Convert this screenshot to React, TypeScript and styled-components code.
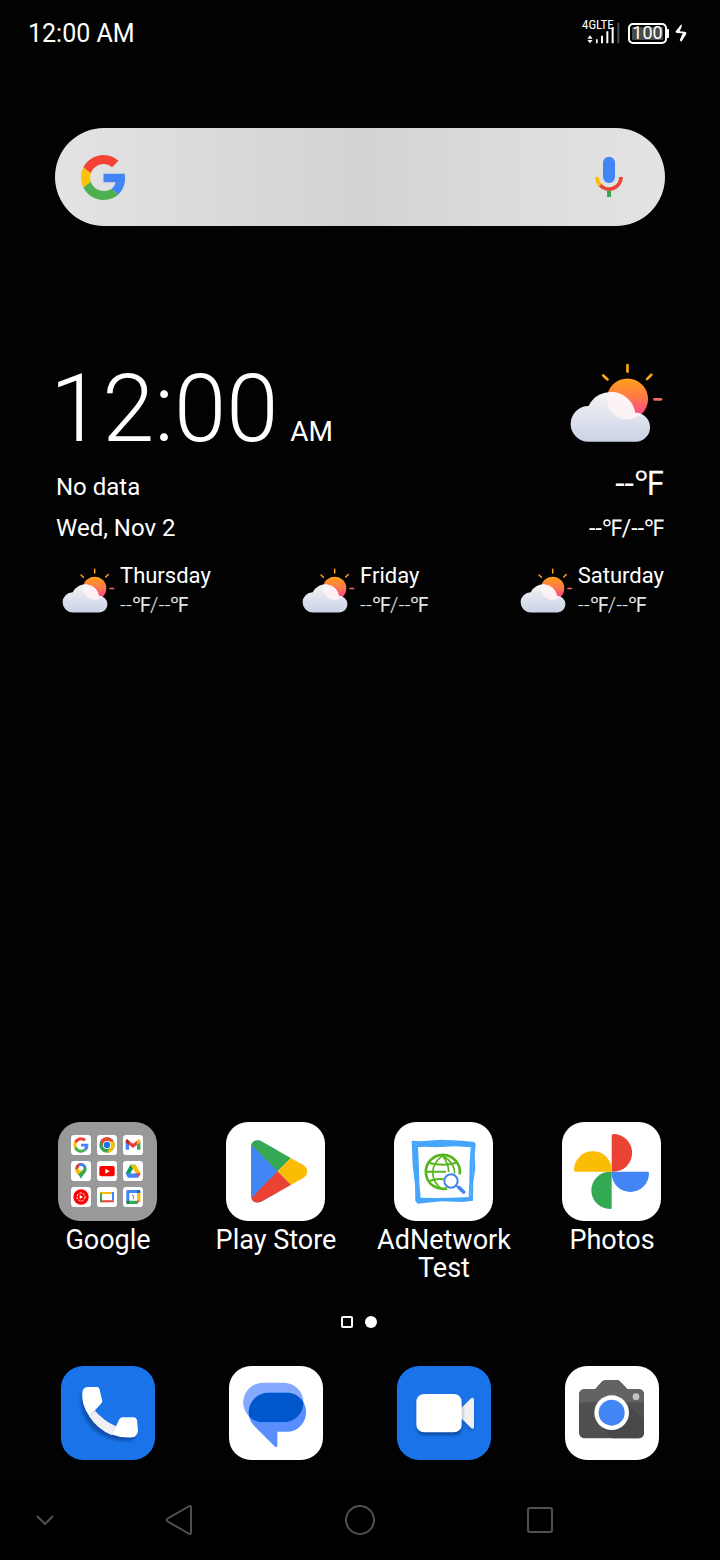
import React from 'react';
import styled, { createGlobalStyle } from 'styled-components';

const GlobalStyle = createGlobalStyle`
  *, *::before, *::after { box-sizing: border-box; }
  html, body { margin: 0; padding: 0; background: #020202; }
  button, input { font: inherit; color: inherit; border: 0; padding: 0; margin: 0; background: none; }
  button { cursor: pointer; }
  svg { display: block; flex: none; }
`;

const Screen = styled.div`
  display: flex;
  flex-direction: column;
  min-height: 100vh;
  background: #020202;
  color: #fff;
  font-family: Roboto, 'Liberation Sans', sans-serif;
  font-weight: 400;
`;

const StatusBar = styled.header`
  display: flex;
  align-items: center;
  justify-content: space-between;
  height: 68px;
  padding: 0 33px 0 28px;
  font-size: 25px;
  line-height: 30px;
`;

const StatusIcons = styled.div`
  display: flex;
  align-items: center;
  padding-bottom: 2px;
`;

const Network = styled.div`
  position: relative;
  margin: 0 8px 4px 0;
`;

const NetworkLabel = styled.span`
  position: absolute;
  top: 0;
  left: 0;
  font-family: 'Roboto Condensed', 'Liberation Sans Narrow', Roboto, sans-serif;
  font-size: 13px;
  line-height: 13px;
`;

const BatteryBody = styled.div`
  display: flex;
  align-items: center;
  justify-content: center;
  width: 39px;
  height: 21px;
  border: 2px solid #fff;
  border-radius: 5px;
  background: #4a4a4a;
  box-shadow: inset 0 0 0 2px #020202;
  font-size: 18px;
  line-height: 18px;
`;

const BatteryTip = styled.div`
  width: 2px;
  height: 9px;
  margin-right: 5px;
  border-radius: 0 1px 1px 0;
  background: #fff;
`;

const SearchForm = styled.form`
  display: flex;
  align-items: center;
  height: 98px;
  margin: 60px 55px 0;
  padding: 0 40px 0 26px;
  border-radius: 49px;
  background: linear-gradient(90deg, #e3e3e3 0%, #dddddd 18%, #d3d3d3 50%, #dcdcdc 75%, #e3e3e3 100%);
`;

const SearchInput = styled.input`
  flex: 1;
  min-width: 0;
  height: 60px;
  margin: 0 16px;
  color: #222;
  font-size: 27px;
  outline: none;
`;

const Weather = styled.section`
  margin: 137px 56px 0;
`;

const Columns = styled.div`
  display: flex;
  justify-content: space-between;
`;

const Side = styled.div<{ $end?: boolean }>`
  display: flex;
  flex-direction: column;
  align-items: ${(p) => (p.$end ? 'flex-end' : 'flex-start')};
`;

const Clock = styled.div`
  display: flex;
  align-items: baseline;
  height: 104px;
  margin-left: -6px;
  font-size: 94px;
  font-weight: 300;
  line-height: 92px;
`;

const Meridiem = styled.span`
  margin-left: 12px;
  font-size: 28px;
  font-weight: 400;
`;

const ArtBox = styled.div`
  height: 100px;
  padding-right: 1px;
`;

const Line = styled.div`
  font-size: 24px;
  line-height: 41px;
`;

const CurrentTemp = styled(Line)`
  margin-bottom: 4px;
  font-size: 34px;
`;

const TempRange = styled(Line)`
  font-size: 23px;
`;

const Forecast = styled.ul`
  display: flex;
  justify-content: space-between;
  margin: 12px 0 0;
  padding: 0 0 0 6px;
  list-style: none;
`;

const Day = styled.li`
  display: flex;
  align-items: center;
  gap: 5px;
  font-size: 22px;
  line-height: 30px;
`;

const DayTemp = styled.div`
  font-size: 21px;
  font-weight: 300;
  line-height: 28px;
  color: #e4e4e4;
`;

const Spacer = styled.div`
  flex: 1;
`;

const AppGrid = styled.nav`
  display: grid;
  grid-template-columns: repeat(4, 1fr);
  padding: 0 24px;
`;

const AppButton = styled.button`
  display: flex;
  flex-direction: column;
  align-items: center;
  gap: 5px;
`;

const Tile = styled.span<{ $size: number; $bg: string }>`
  display: block;
  width: ${(p) => p.$size}px;
  height: ${(p) => p.$size}px;
  margin-right: 1px;
  border-radius: 22px;
  overflow: hidden;
  background: ${(p) => p.$bg};
`;

const Folder = styled.span`
  display: grid;
  grid-template-columns: repeat(3, 20px);
  gap: 6px;
  padding: 13px;
`;

const AppLabel = styled.span`
  max-width: 150px;
  font-size: 27px;
  line-height: 28px;
  text-align: center;
`;

const Pager = styled.div`
  display: flex;
  justify-content: center;
  align-items: center;
  gap: 12px;
  margin: 34px 2px 38px 0;
`;

const PageMark = styled.button<{ $active?: boolean }>`
  width: 12px;
  height: 12px;
  border: ${(p) => (p.$active ? '0' : '2px solid #fff')};
  border-radius: ${(p) => (p.$active ? '50%' : '2px')};
  background: ${(p) => (p.$active ? '#fff' : 'transparent')};
`;

const NavBar = styled.footer`
  display: grid;
  grid-template-columns: 1fr 2fr 2fr 2fr 1fr;
  align-items: center;
  height: 80px;
  margin-top: 20px;
  background: #000;
`;

const NavButton = styled.button`
  display: flex;
  align-items: center;
  justify-content: center;
  height: 80px;
`;

const GPaths = () => (
  <>
    <path fill="#f44336" d="M24 9.5c3.54 0 6.71 1.22 9.21 3.6l6.85-6.85C35.9 2.38 30.47 0 24 0 14.62 0 6.51 5.38 2.56 13.22l7.98 6.19C12.43 13.72 17.74 9.5 24 9.5z" />
    <path fill="#4285f4" d="M46.98 24.55c0-1.57-.15-3.09-.38-4.55H24v9.02h12.94c-.58 2.96-2.26 5.48-4.78 7.18l7.73 6c4.51-4.18 7.09-10.36 7.09-17.65z" />
    <path fill="#ffc107" d="M10.53 28.59c-.48-1.45-.76-2.99-.76-4.59s.27-3.14.76-4.59l-7.98-6.19C.92 16.46 0 20.12 0 24c0 3.88.92 7.54 2.56 10.78l7.97-6.19z" />
    <path fill="#4caf50" d="M24 48c6.48 0 11.93-2.13 15.89-5.81l-7.73-6c-2.15 1.45-4.92 2.3-8.16 2.3-6.26 0-11.57-4.22-13.47-9.91l-7.98 6.19C6.51 42.62 14.62 48 24 48z" />
  </>
);

const MicIcon = () => (
  <svg width="32" height="42" viewBox="593 156 32 42" aria-hidden="true">
    <rect x="603" y="156.7" width="12" height="26.3" rx="6" fill="#4285f4" />
    <path d="M597 177a12 12 0 0 0 3.4 8.4" fill="none" stroke="#fbbc05" strokeWidth="3.8" />
    <path d="M600.2 185.2A12 12 0 0 0 621 177" fill="none" stroke="#ea4335" strokeWidth="3.8" />
    <path d="M607 191h4v6h-4z" fill="#34a853" />
  </svg>
);

const SignalIcon = () => (
  <svg width="38" height="26" viewBox="66 54 114 78" aria-hidden="true">
    <path fill="#fff" d="M82 116l8-10 8 10zM82 120l8 10 8-10zM108 118h5v12h-5zM123 107h6v23h-6zM139 94h6v36h-6zM155 81h6v49h-6z" />
    <path fill="#4c4c4c" d="M172 68h6v62h-6z" />
  </svg>
);

const BoltIcon = () => (
  <svg width="13" height="20" viewBox="340 70 39 60" aria-hidden="true">
    <path d="M362 74L345 95Q344 100 349 100L366 101L357 122L362 126L377 103Q378 96 372 96L357 95L364 79Z" fill="#fff" />
  </svg>
);

const CloudSun = ({ width, height, id }: { width: number; height: number; id: string }) => (
  <svg width={width} height={height} viewBox="60 40 280 240" aria-hidden="true">
    <defs>
      <linearGradient id={`${id}-sun`} x1="0" y1="0" x2="0" y2="1">
        <stop offset="0" stopColor="#ff9f1a" />
        <stop offset="0.45" stopColor="#ff7a45" />
        <stop offset="0.85" stopColor="#ff4b86" />
        <stop offset="1" stopColor="#ff4b90" />
      </linearGradient>
      <linearGradient id={`${id}-cloud`} x1="0" y1="0" x2="0" y2="1">
        <stop offset="0" stopColor="#f4f4f4" />
        <stop offset="1" stopColor="#cbd2e6" />
      </linearGradient>
      <clipPath id={`${id}-clip`}>
        <path d="M116 277A54 54 0 0 1 116 169A74 74 0 0 1 256 189A44 44 0 0 1 258 277Z" />
      </clipPath>
    </defs>
    <g stroke="#ffa416" strokeWidth="8" strokeLinecap="round">
      <path d="M233 46v20M160 77l13 12M305 75l-13 13" />
      <path stroke="#f0695a" d="M314 149h20" />
    </g>
    <circle cx="233" cy="148" r="62" fill={`url(#${id}-sun)`} />
    <path d="M116 277A54 54 0 0 1 116 169A74 74 0 0 1 256 189A44 44 0 0 1 258 277Z" fill={`url(#${id}-cloud)`} />
    <circle cx="233" cy="148" r="62" fill="#fff3f4" fillOpacity="0.85" clipPath={`url(#${id}-clip)`} />
  </svg>
);

const MiniTile = ({ children }: { children: React.ReactNode }) => (
  <svg width="20" height="20" viewBox="0 0 60 60" aria-hidden="true">
    <rect width="60" height="60" rx="10" fill="#fff" />
    {children}
  </svg>
);

const GoogleFolder = () => (
  <Folder>
    <MiniTile>
      <g transform="translate(7 7) scale(.96)">
        <GPaths />
      </g>
    </MiniTile>
    <MiniTile>
      <circle cx="30" cy="30" r="23" fill="#34a853" />
      <path d="M30 18.500H49.900A23 23 0 0 1 30 53L40 36Z" fill="#fbbc05" />
      <path d="M10.100 18.500L20 36L30 30V18.500H49.900A23 23 0 0 0 10.100 18.500Z" fill="#ea4335" />
      <circle cx="30" cy="30" r="12" fill="#fff" />
      <circle cx="30" cy="30" r="9.500" fill="#1a73e8" />
    </MiniTile>
    <MiniTile>
      <path d="M8 18v26h10V25z" fill="#4285f4" />
      <path d="M52 18v26H42V25z" fill="#34a853" />
      <path d="M18 17l12 9 12-9v13L30 39 18 30z" fill="#ea4335" />
      <path d="M8 18q0-6 6-5l4 4v13L8 22z" fill="#c5221f" />
      <path d="M52 18q0-6-6-5l-4 4v13l10-8z" fill="#fbbc05" />
    </MiniTile>
    <MiniTile>
      <path d="M30 54C27 42 13 36 13 23A17 17 0 0 1 47 23C47 36 33 42 30 54Z" fill="#34a853" />
      <path d="M17 12A17 17 0 0 1 36 7L20 28L13 23Q13 16 17 12Z" fill="#ea4335" />
      <path d="M14 28L30 15L38 26L20 41Q15 35 14 28Z" fill="#fbbc05" />
      <path d="M25 8A17 17 0 0 1 45 16L35 27L22 18Z" fill="#4285f4" />
      <circle cx="30" cy="22" r="7" fill="#fff" />
    </MiniTile>
    <MiniTile>
      <rect x="7" y="15" width="46" height="31" rx="6" fill="#f00" />
      <path d="M25 23v15l13-7.500z" fill="#fff" />
    </MiniTile>
    <MiniTile>
      <path d="M22 11h16L18 47 8 37z" fill="#0f9d58" />
      <path d="M22 11h16l15 26H38z" fill="#fbbc04" />
      <path d="M16 37h37l-8 13H15L8 38z" fill="#4285f4" />
      <path d="M40 37h13l-7 12z" fill="#ea4335" />
      <path d="M30 24l8 13H22z" fill="#fff" />
    </MiniTile>
    <MiniTile>
      <circle cx="30" cy="30" r="23" fill="#f00" />
      <circle cx="30" cy="30" r="12" fill="none" stroke="#fff" strokeWidth="3" strokeDasharray="7 3" />
      <path d="M26 24v12l10-6z" fill="#fff" />
    </MiniTile>
    <MiniTile>
      <path d="M9 15h36v6H9z" fill="#fbbc04" />
      <path d="M9 19h6v27H9z" fill="#34a853" />
      <path d="M45 15h6v25h-6z" fill="#4285f4" />
      <path d="M13 40h38v6H13z" fill="#ea4335" />
    </MiniTile>
    <MiniTile>
      <path d="M10 13q0-4 4-4h30v9H19v24h-9z" fill="#4285f4" />
      <path d="M42 9h7q3 0 3 3v7H42z" fill="#1967d2" />
      <path d="M42 18h10v24H42z" fill="#fbbc04" />
      <path d="M18 41h24v10H18z" fill="#34a853" />
      <path d="M10 41h9v10h-5q-4 0-4-4z" fill="#188038" />
      <path d="M42 41h10L42 51z" fill="#ea4335" />
      <path d="M27 25h4v11" fill="none" stroke="#4285f4" strokeWidth="3" />
    </MiniTile>
  </Folder>
);

const PlayArt = () => (
  <svg width="99" height="99" viewBox="33 21 297 297" aria-hidden="true">
    <defs>
      <clipPath id="play-shape">
        <path d="M108 97Q109 76 127 76Q134 76 141 80L266 151Q277 159 277 169Q277 180 266 188L141 259Q134 263 127 263Q109 262 108 242Z" />
      </clipPath>
    </defs>
    <g clipPath="url(#play-shape)">
      <path d="M100 60H188V280H100Z" fill="#4285f4" />
      <path d="M90 70L188 169L300 57V40H90Z" fill="#34a853" />
      <path d="M90 268L188 169L300 281V300H90Z" fill="#ea4335" />
      <path d="M188 169L290 67V271Z" fill="#fbbc04" />
    </g>
  </svg>
);

const AdNetworkArt = () => (
  <svg width="99" height="99" viewBox="57 21 297 297" aria-hidden="true">
    <path fillRule="evenodd" fill="#45a6fb" d="M110 77L134 79L200 74L263 77L297 81L302 86L299 120L301 160L295 200L294 257L262 261L200 259L155 263L128 266L121 258L120 210L113 150ZM129 97L132 160L133 204L137 248L180 249L230 248L281 246L283 200L284 140L287 97L240 94L180 97L150 95Z" />
    <path d="M112 84L130 90M117 140L129 150M290 95L293 180M287 245L289 205" stroke="#5ab3fd" strokeWidth="3" fill="none" />
    <g fill="none" stroke="#55b51b">
      <path d="M216 220A51 51 0 1 1 254 178" strokeWidth="8" />
      <path d="M203 122C164 150 164 195 200 222M203 122C235 140 240 158 239 176M203 122C217 140 221 155 221 171" strokeWidth="5" />
      <path d="M163 144Q203 154 243 144M153 170H213M163 198Q185 190 206 193" strokeWidth="6" />
    </g>
    <circle cx="228" cy="198" r="20" fill="#fff" stroke="#3f86f3" strokeWidth="6" />
    <path d="M244 212L252 219" stroke="#3f86f3" strokeWidth="5" />
    <path d="M252 218L266 231" stroke="#3f86f3" strokeWidth="11" strokeLinecap="round" />
  </svg>
);

const PhotosArt = () => (
  <svg width="99" height="99" viewBox="36 21 297 297" aria-hidden="true">
    <path fill="#ea4335" d="M185 170V62Q185 57 190 57A56 56 0 0 1 190 170Z" />
    <path fill="#4285f4" d="M185 170H293Q298 170 297 175A56 56 0 0 1 185 175Z" />
    <path fill="#34a853" d="M185 170V278Q185 283 180 282A56 56 0 0 1 180 170Z" />
    <path fill="#fbbc04" d="M185 170H77Q72 170 72 165A56 56 0 0 1 185 165Z" />
  </svg>
);

const PhoneArt = () => (
  <svg width="94" height="94" viewBox="62 196 282 282" aria-hidden="true">
    <defs>
      <filter id="phone-shadow" x="-20%" y="-20%" width="140%" height="140%">
        <feGaussianBlur stdDeviation="4" />
      </filter>
    </defs>
    <path d="M124 278Q113 335 158 386Q205 426 275 420L292 400L200 395Z" fill="#10459a" opacity="0.75" filter="url(#phone-shadow)" />
    <path d="M146 346L164 330Q190 360 227 377L214 403Q170 385 146 346Z" fill="#eef0f2" />
    <path d="M126 275Q128 260 142 259L171 259Q177 260 178 267L186 302Q185 306 182 309L164 329L147 347Q122 312 126 275Z" fill="#fff" />
    <path d="M227 377L237 356Q240 350 247 350H280Q288 351 290 358L293 390Q291 408 276 410Q243 413 212 401Z" fill="#fff" />
    <path d="M147 347L165 330M212 401L226 377" stroke="#d5d8dd" strokeWidth="3" />
  </svg>
);

const MessagesArt = () => (
  <svg width="94" height="94" viewBox="566 196 282 282" aria-hidden="true">
    <defs>
      <clipPath id="message-bubble">
        <path d="M668 246H730A59 59 0 0 1 730 365H668A59 59 0 0 1 668 246Z" />
      </clipPath>
    </defs>
    <path d="M668 246H730A59 59 0 0 1 730 365H668A59 59 0 0 1 668 246Z" fill="#84a9ff" />
    <path d="M684 276H746A59 59 0 0 1 746 393H711V435Q710 441 704 438L640 374Q625 358 625 335A59 59 0 0 1 684 276Z" fill="#5a8eff" />
    <path d="M684 276H746A59 59 0 0 1 746 393H711V435L640 374Q625 358 625 335A59 59 0 0 1 684 276Z" fill="#0057cc" clipPath="url(#message-bubble)" />
  </svg>
);

const VideoArt = () => (
  <svg width="94" height="94" viewBox="50 196 282 282" aria-hidden="true">
    <defs>
      <filter id="video-shadow" x="-20%" y="-20%" width="140%" height="150%">
        <feGaussianBlur stdDeviation="5" />
      </filter>
    </defs>
    <rect x="110" y="290" width="134" height="114" rx="22" fill="#0b3f94" opacity="0.8" filter="url(#video-shadow)" />
    <path d="M244 333L270 302L281 306V388L270 388L244 360Z" fill="#0b3f94" opacity="0.5" filter="url(#video-shadow)" />
    <path d="M243 322L272 293Q280 288 281 297V379Q280 388 272 382L243 353Z" fill="#eef0f2" />
    <path d="M243 322L252 314V361L243 353Z" fill="#cfd6df" />
    <rect x="108" y="280" width="136" height="115" rx="23" fill="#fff" />
  </svg>
);

const CameraArt = () => (
  <svg width="94" height="94" viewBox="554 196 282 282" aria-hidden="true">
    <path d="M596 282Q597 266 614 265H645L664 244Q668 239 675 239H710Q716 239 720 243L741 265H774Q791 266 791 282V396Q790 412 774 413H614Q597 412 596 396Z" fill="#505050" />
    <path d="M596 305V282Q597 266 614 265H645L664 244Q668 239 675 239H710Q716 239 720 243L741 265H774Q791 266 791 282V305Z" fill="#636363" />
    <path d="M735 305L791 357V396Q790 412 774 413H696L660 376Z" fill="#484848" />
    <circle cx="694" cy="336" r="52" fill="#fff" />
    <circle cx="694" cy="336" r="39" fill="#4285f4" />
    <circle cx="767" cy="288" r="10" fill="#c2c2c2" />
  </svg>
);

const apps = [
  { label: 'Google', bg: '#999999', art: <GoogleFolder /> },
  { label: 'Play Store', bg: '#ffffff', art: <PlayArt /> },
  { label: 'AdNetwork Test', bg: '#ffffff', art: <AdNetworkArt /> },
  { label: 'Photos', bg: '#ffffff', art: <PhotosArt /> },
];

const dock = [
  { label: 'Phone', bg: '#1a73e8', art: <PhoneArt /> },
  { label: 'Messages', bg: '#ffffff', art: <MessagesArt /> },
  { label: 'Video calls', bg: '#1a73e8', art: <VideoArt /> },
  { label: 'Camera', bg: '#ffffff', art: <CameraArt /> },
];

const days = ['Thursday', 'Friday', 'Saturday'];

const navStroke = { fill: 'none', stroke: '#505050', strokeWidth: 2, strokeLinejoin: 'round' as const };

export default function App() {
  return (
    <Screen>
      <GlobalStyle />
      <StatusBar>
        <span>12:00 AM</span>
        <StatusIcons>
          <Network>
            <SignalIcon />
            <NetworkLabel>4GLTE</NetworkLabel>
          </Network>
          <BatteryBody>100</BatteryBody>
          <BatteryTip />
          <BoltIcon />
        </StatusIcons>
      </StatusBar>

      <SearchForm role="search" onSubmit={(e) => e.preventDefault()}>
        <svg width="45" height="45" viewBox="0 0 48 48" aria-hidden="true">
          <GPaths />
        </svg>
        <SearchInput type="text" aria-label="Search" />
        <button type="button" aria-label="Voice search">
          <MicIcon />
        </button>
      </SearchForm>

      <Weather>
        <Columns>
          <Side>
            <Clock>
              12:00<Meridiem>AM</Meridiem>
            </Clock>
            <Line>No data</Line>
            <Line>Wed, Nov 2</Line>
          </Side>
          <Side $end>
            <ArtBox>
              <CloudSun width={93} height={80} id="today" />
            </ArtBox>
            <CurrentTemp>--℉</CurrentTemp>
            <TempRange>--℉/--℉</TempRange>
          </Side>
        </Columns>
        <Forecast>
          {days.map((day) => (
            <Day key={day}>
              <CloudSun width={53} height={45} id={day} />
              <div>
                {day}
                <DayTemp>--℉/--℉</DayTemp>
              </div>
            </Day>
          ))}
        </Forecast>
      </Weather>

      <Spacer />

      <AppGrid aria-label="Apps">
        {apps.map((app) => (
          <AppButton key={app.label} type="button">
            <Tile $size={99} $bg={app.bg}>{app.art}</Tile>
            <AppLabel>{app.label}</AppLabel>
          </AppButton>
        ))}
      </AppGrid>

      <Pager>
        <PageMark type="button" aria-label="Page 1" />
        <PageMark type="button" aria-label="Page 2" $active />
      </Pager>

      <AppGrid aria-label="Dock">
        {dock.map((app) => (
          <AppButton key={app.label} type="button" aria-label={app.label}>
            <Tile $size={94} $bg={app.bg}>{app.art}</Tile>
          </AppButton>
        ))}
      </AppGrid>

      <NavBar>
        <NavButton type="button" aria-label="Hide">
          <svg width="20" height="12" viewBox="0 0 20 12"><path d="M2 2l8 8 8-8" {...navStroke} /></svg>
        </NavButton>
        <NavButton type="button" aria-label="Back">
          <svg width="28" height="32" viewBox="0 0 28 32"><path d="M22.500 2.500L1.500 14.700Q0 16 1.500 17.300L22.500 29.500Q25 31 25 28.500V3.500Q25 1 22.500 2.500Z" {...navStroke} /></svg>
        </NavButton>
        <NavButton type="button" aria-label="Home">
          <svg width="32" height="32" viewBox="0 0 32 32"><circle cx="16" cy="16" r="14" {...navStroke} /></svg>
        </NavButton>
        <NavButton type="button" aria-label="Recents">
          <svg width="28" height="28" viewBox="0 0 28 28"><rect x="2" y="2" width="24" height="24" rx="2" {...navStroke} /></svg>
        </NavButton>
      </NavBar>
    </Screen>
  );
}
